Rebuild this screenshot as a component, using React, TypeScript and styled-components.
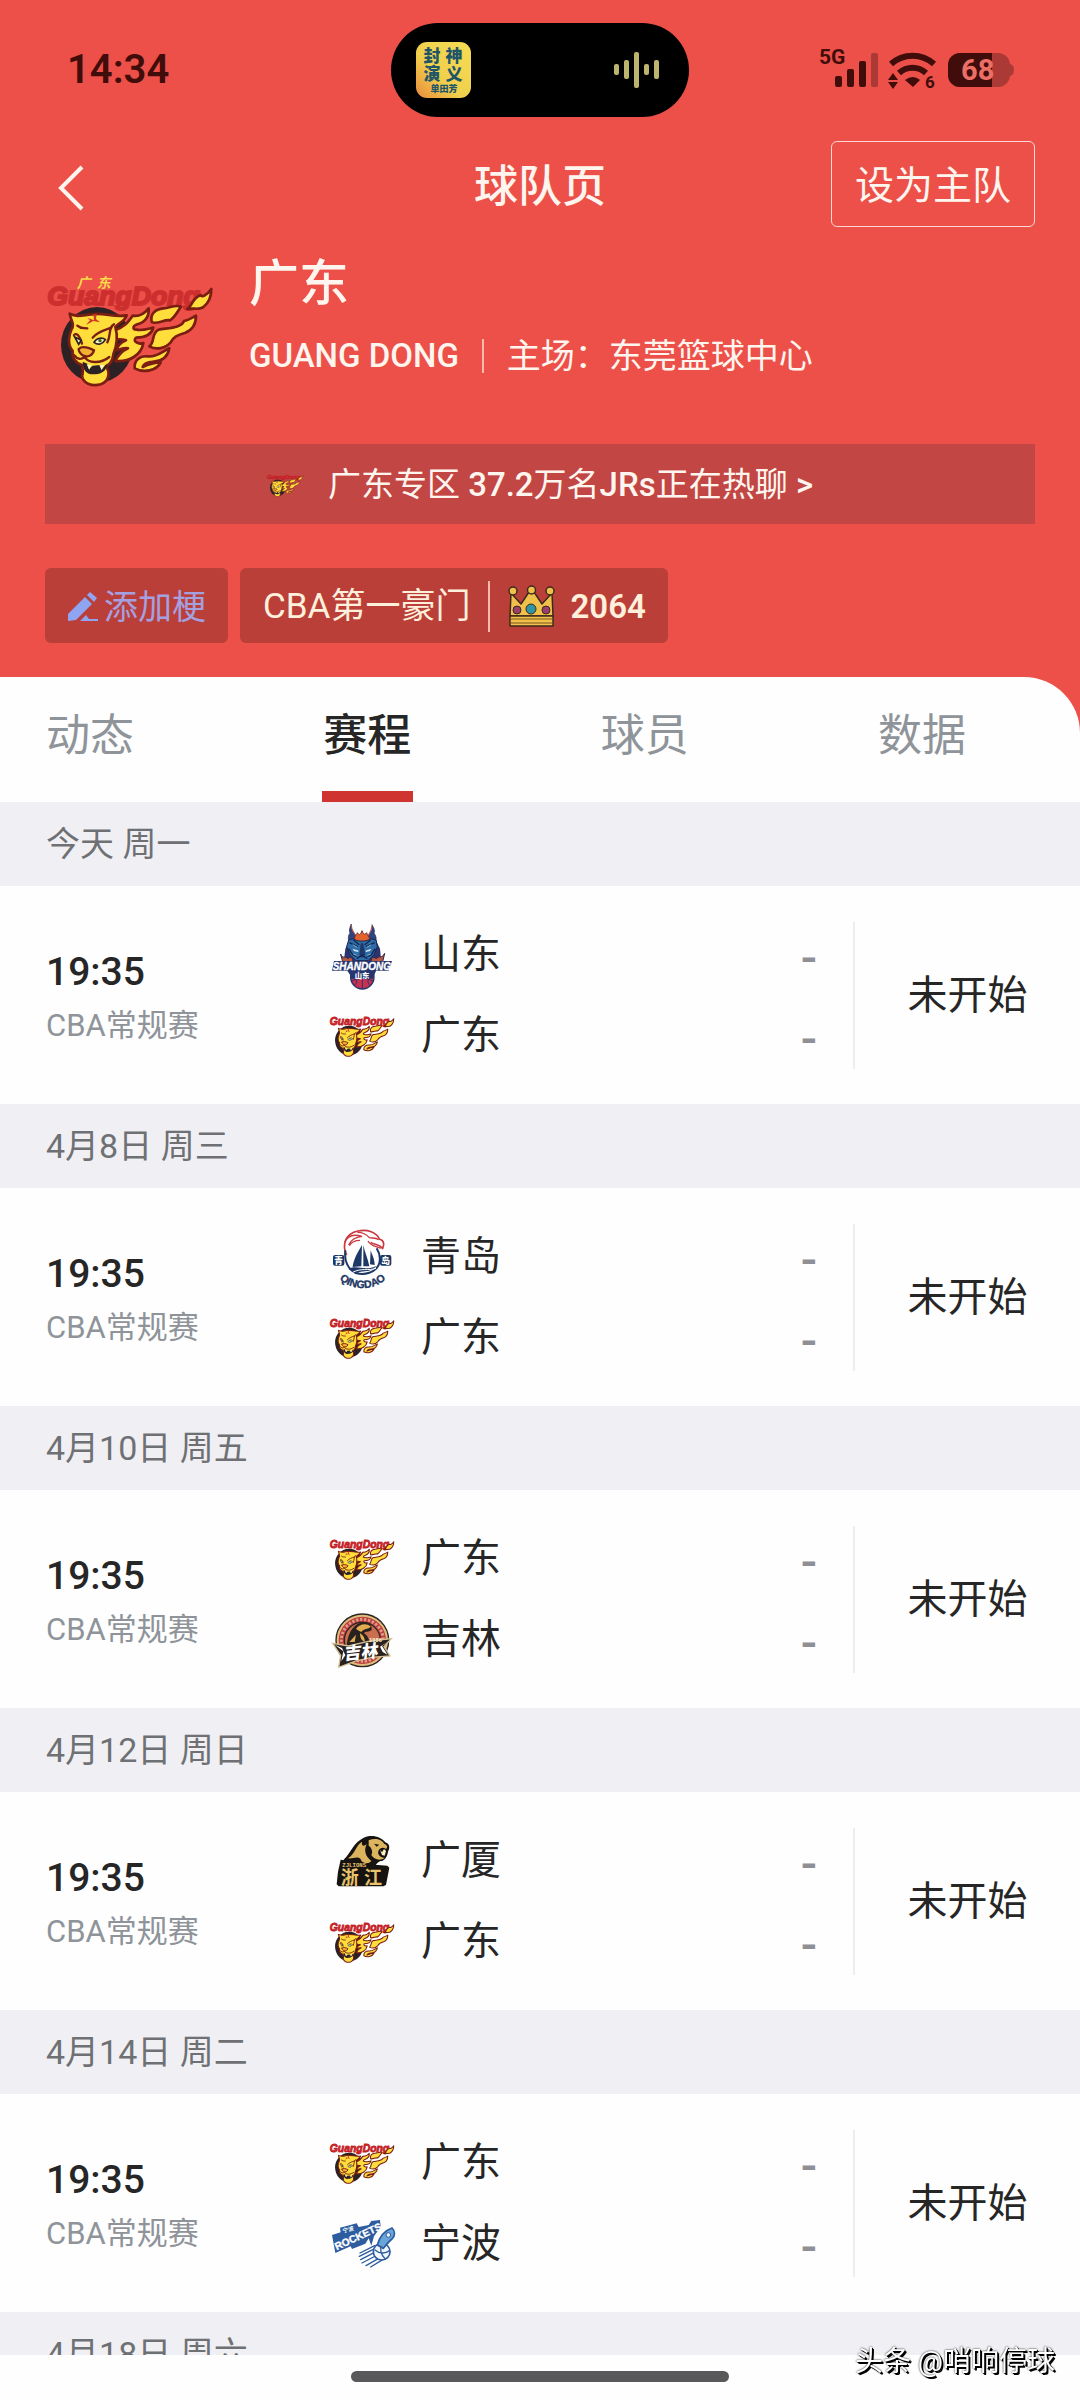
import React from 'react';
import styled, { createGlobalStyle } from 'styled-components';

const GlobalStyle = createGlobalStyle`
  *, *::before, *::after { box-sizing: border-box; }
  body {
    margin: 0;
    background: #fefefe;
    font-family: Roboto, "Noto Sans CJK SC", sans-serif;
    color: #262626;
  }
  button {
    font: inherit;
    color: inherit;
    border: 0;
    padding: 0;
    margin: 0;
    background: none;
    cursor: pointer;
  }
  h1, h2, p, ul { margin: 0; padding: 0; font-weight: 400; }
  svg { display: block; flex: none; overflow: visible; }
`;

const Page = styled.div`
  display: flex;
  flex-direction: column;
  min-height: 100vh;
`;

const Hero = styled.header`
  padding: 23px 45px 34px;
  background: #ec5049;
  color: #fff5ef;
`;

const StatusBar = styled.div`
  display: grid;
  grid-template-columns: 1fr auto 1fr;
  align-items: center;
  color: #400d0b;
`;

const Clock = styled.time`
  padding-left: 22px;
  font-size: 40px;
  line-height: 48px;
  font-weight: 600;
`;

const Island = styled.div`
  display: flex;
  align-items: center;
  justify-content: space-between;
  width: 298px;
  height: 94px;
  padding: 0 29px 0 25px;
  border-radius: 47px;
  background: #000;
`;

const StatusIcons = styled.div`
  display: flex;
  justify-content: flex-end;
  padding-right: 20px;
`;

const NavBar = styled.nav`
  display: grid;
  grid-template-columns: 1fr auto 1fr;
  align-items: center;
  margin-top: 24px;
`;

const BackButton = styled.button`
  justify-self: start;
  padding: 12px 12px 4px;
`;

const Title = styled.h1`
  padding-top: 6px;
  font-size: 44px;
  line-height: 56px;
  font-weight: 500;
`;

const HomeTeamButton = styled.button`
  justify-self: end;
  height: 86px;
  padding: 3px 23px 0;
  border: 1px solid #fbd9d2;
  border-radius: 6px;
  font-size: 39px;
  line-height: 56px;
`;

const TeamRow = styled.section`
  display: flex;
  gap: 37px;
  margin-top: 26px;
  padding-left: 3px;
`;

const CrestBox = styled.div`
  padding-top: 24px;
`;

const TeamName = styled.h2`
  padding-top: 3px;
  font-size: 50px;
  line-height: 56px;
  font-weight: 500;
`;

const TeamMeta = styled.p`
  display: flex;
  align-items: center;
  gap: 23px;
  margin-top: 24px;
  font-size: 33px;
  line-height: 40px;
`;

const Arena = styled.span`
  font-size: 34px;
`;

const Latin = styled.span`
  font-weight: 500;
`;

const Rule = styled.span<{ $height: number }>`
  width: 2px;
  height: ${(p) => p.$height}px;
  background: #f7b9ae;
`;

const ChatBanner = styled.button`
  display: flex;
  align-items: center;
  justify-content: center;
  gap: 25px;
  width: 100%;
  height: 80px;
  padding-top: 2px;
  margin-top: 57px;
  background: #c24643;
  font-size: 33px;
  line-height: 40px;
`;

const Tags = styled.div`
  display: flex;
  gap: 12px;
  margin-top: 44px;
`;

const Tag = styled.button<{ $accent?: boolean }>`
  display: flex;
  align-items: center;
  gap: ${(p) => (p.$accent ? 6 : 18)}px;
  height: 75px;
  padding: 2px 22px 0 23px;
  border-radius: 6px;
  background: #ba3f39;
  color: ${(p) => (p.$accent ? '#a5a0e0' : '#fff0dc')};
  font-size: ${(p) => (p.$accent ? 34 : 35)}px;
  line-height: 40px;
`;

const Votes = styled.span`
  display: flex;
  align-items: center;
  gap: 15px;
  font-size: 33px;
  font-weight: 600;
`;

const TabsBack = styled.div`
  background: #ec5049;
`;

const Tabs = styled.div`
  display: flex;
  justify-content: space-between;
  padding: 0 112px 0 45px;
  border-top-right-radius: 56px;
  background: #fefefe;
`;

const Tab = styled.button<{ $active?: boolean }>`
  height: 125px;
  padding: 3px 2px 0 1px;
  border-bottom: 11px solid ${(p) => (p.$active ? '#d03430' : 'transparent')};
  color: ${(p) => (p.$active ? '#262626' : '#8e9499')};
  font-size: 44px;
  line-height: 56px;
  font-weight: ${(p) => (p.$active ? 500 : 400)};
`;

const DayHeading = styled.h2`
  padding: 20px 46px;
  background: #f0f0f4;
  color: #6f7074;
  font-size: 34px;
  line-height: 44px;
`;

const Match = styled.article`
  display: grid;
  grid-template-columns: 284px 1fr 227px;
  align-items: center;
  height: 218px;
  padding-left: 46px;
`;

const MatchTime = styled.time`
  display: block;
  padding-top: 3px;
  font-size: 39px;
  line-height: 48px;
  font-weight: 500;
`;

const League = styled.p`
  margin-top: 10px;
  color: #8e9499;
  font-size: 31px;
  line-height: 40px;
`;

const Sides = styled.ul`
  padding-right: 36px;
  list-style: none;
`;

const Side = styled.li`
  display: flex;
  align-items: center;
  height: 81px;
  font-size: 40px;
  line-height: 48px;
`;

const SideName = styled.span`
  margin-left: 27px;
`;

const Score = styled.span`
  margin-left: auto;
  padding-top: 6px;
  color: #909094;
  font-size: 48px;
  font-weight: 500;
`;

const MatchState = styled.p`
  height: 147px;
  border-left: 2px solid #ededf0;
  font-size: 40px;
  line-height: 147px;
  text-align: center;
`;

const HomeBar = styled.footer`
  position: fixed;
  left: 0;
  right: 0;
  bottom: 0;
  display: flex;
  justify-content: center;
  height: 45px;
  padding-top: 16px;
  background: #fefefe;
`;

const HomeHandle = styled.div`
  width: 35%;
  height: 11px;
  border-radius: 6px;
  background: #59595b;
`;

const Watermark = styled.span`
  position: absolute;
  right: 25px;
  bottom: 20px;
  color: #fff;
  font-size: 28px;
  line-height: 36px;
  text-shadow: 1px 1px 0 #000, 2px 2px 0 #000, 0 0 2px #000;
`;

function AlbumCover() {
  return (
    <svg width="55" height="56" viewBox="0 0 55 56" aria-hidden="true">
      <defs>
        <linearGradient id="cover" x1="1" y1="0" x2="0" y2="1">
          <stop offset="0" stopColor="#f5dc55" />
          <stop offset="0.6" stopColor="#f0cf4c" />
          <stop offset="1" stopColor="#ea8a3a" />
        </linearGradient>
      </defs>
      <rect width="55" height="56" rx="11" fill="url(#cover)" />
      <g fill="#1f5568" fontFamily="Noto Sans CJK SC, sans-serif" fontWeight="900" textAnchor="middle">
        <text x="16" y="20" fontSize="17">封</text>
        <text x="38" y="20" fontSize="17">神</text>
        <text x="16" y="38" fontSize="17">演</text>
        <text x="38" y="38" fontSize="17">义</text>
        <text x="28" y="50" fontSize="9">单田芳</text>
      </g>
    </svg>
  );
}

function SoundWave() {
  return (
    <svg width="46" height="38" viewBox="0 0 46 38" fill="#bdb56e" aria-hidden="true">
      <rect x="0" y="13" width="5" height="11" rx="2" />
      <rect x="10" y="9" width="5" height="19" rx="2" />
      <rect x="20" y="1" width="5" height="36" rx="2" />
      <rect x="30" y="13" width="5" height="11" rx="2" />
      <rect x="40" y="9" width="5" height="19" rx="2" />
    </svg>
  );
}

function SystemIcons() {
  return (
    <svg width="196" height="44" viewBox="0 0 196 44" fill="#400d0b" role="img" aria-label="5G, Wi-Fi 6, 68%">
      <g fontFamily="Roboto, sans-serif" fontWeight="700">
        <text x="0" y="16" fontSize="21">5G</text>
        <text x="106" y="40" fontSize="17">6</text>
      </g>
      <rect x="16" y="28" width="7" height="11" rx="2" />
      <rect x="28" y="21" width="7" height="18" rx="2" />
      <rect x="40" y="13" width="7" height="26" rx="2" />
      <rect x="52" y="5" width="7" height="34" rx="2" fill="#ab3a36" />
      <g fill="none" stroke="#400d0b" strokeWidth="6">
        <path d="M72 16a32 32 0 0 1 43 0" />
        <path d="M80 25a20 20 0 0 1 27 0" />
      </g>
      <path d="M86 32q8-6 15 0l-7 7z" />
      <path d="M69 32l5-7 5 7zM69 34h10l-5 7z" />
      <rect x="129" y="5" width="62" height="34" rx="12" fill="#ab3a36" />
      <path d="M191 16q4 1 4 6t-4 6z" fill="#ab3a36" />
      <path d="M141 5h32v34h-32a12 12 0 0 1-12-12v-10a12 12 0 0 1 12-12z" />
      <text x="142" y="32" fontSize="29" fontWeight="700" fontFamily="Roboto, sans-serif" fill="#ec6f66">68</text>
    </svg>
  );
}

function GuangdongCrest({ width, onRed }: { width: number; onRed?: boolean }) {
  return (
    <svg width={width} height={Math.round((width * 330) / 492)} viewBox="144 110 492 330" aria-hidden="true">
      {onRed && (
        <text transform="translate(230 142) skewX(-14)" fontSize="42" fontWeight="700" fontFamily="Noto Sans CJK SC, sans-serif" fill="#fbd84a">
          <tspan x="0">广</tspan>
          <tspan x="60">东</tspan>
        </text>
      )}
      <text x="142" y="195" fontSize="80" fontWeight="700" fontStyle="italic" fontFamily="Liberation Sans, sans-serif" fill={onRed ? '#cd2f2f' : '#d8232b'} stroke={onRed ? '#cd2f2f' : '#c01f26'} strokeWidth="6">GuangDong</text>
      <ellipse cx="291" cy="314" rx="108" ry="114" fill="#2c2226" />
      <g fill="#ffde3c" stroke="#7a1d12" strokeWidth="8" strokeLinejoin="round">
        <path d="M456 246C448 222 466 206 490 204C512 202 526 192 543 199C532 214 526 230 510 240C494 236 474 252 456 246Z" />
        <path d="M562 206C578 196 574 176 602 164C604 172 620 166 634 146C634 172 626 188 610 200C598 210 582 202 562 206Z" />
        <path d="M448 318C466 306 452 280 476 268C512 262 544 262 552 242C566 240 574 234 588 226C588 248 578 268 556 277C532 284 520 290 512 306C496 324 470 330 448 318Z" />
        <path d="M404 384C402 360 420 346 442 348C470 352 488 332 508 324C504 346 492 362 462 364C440 366 430 372 428 380C448 370 466 366 482 366C470 392 430 398 404 384Z" />
        <path d="M340 272C372 262 384 246 398 226C408 228 428 226 446 204C448 228 438 244 412 252C396 258 398 268 410 268C426 272 442 266 460 262C454 284 432 292 408 292C398 300 410 314 430 308C424 344 388 366 346 362C356 342 366 332 384 324C370 322 362 326 352 330C350 318 362 306 378 300C366 296 356 296 348 298Z" />
        <path d="M209 220C230 232 250 224 274 222C312 216 342 232 380 225C374 244 354 248 346 260C354 288 350 318 340 342C338 364 326 374 318 378C332 398 326 424 302 432C274 440 248 428 246 406C252 394 246 382 246 374C226 368 214 350 218 332C202 314 206 286 214 268C226 252 212 240 209 220Z" />
      </g>
      <path d="M248 364L262 370L266 386L278 376L300 374L306 386L320 370C322 394 300 402 278 402C262 402 248 392 248 364Z" fill="#2c2226" />
      <path d="M260 372l8 16 6-13zM298 375l7 15 7-16z" fill="#fff7c8" />
      <g fill="none" stroke="#7a1d12" strokeWidth="7" strokeLinecap="round">
        <path d="M236 326C246 316 266 322 282 330C278 346 262 352 250 346C240 340 236 334 236 326Z" fill="#f0b034" />
        <path d="M222 284C230 276 240 288 246 310" />
        <path d="M278 292C290 276 312 270 334 262" />
        <path d="M222 344C232 358 244 358 254 350C264 368 300 372 328 350" />
        <path d="M342 252C324 260 334 284 322 306" />
        <path d="M232 256C242 266 250 262 262 264" />
      </g>
      <path d="M280 222L282 240L262 232L270 240L258 254L280 242L300 246L288 236L290 222Z" fill="#cf3a22" />
      <path d="M282 306C290 292 308 290 316 298C308 312 294 316 282 306Z" fill="#f6f6c0" stroke="#2c2226" strokeWidth="5" />
      <circle cx="300" cy="301" r="5" fill="#3f5a20" />
      <path d="M224 290l20 10-8 12z" fill="#f6f6c0" stroke="#2c2226" strokeWidth="5" />
    </svg>
  );
}

function ShandongCrest() {
  return (
    <svg width="64" height="68" viewBox="90 57 192 204" aria-hidden="true">
      <path d="M136 140L150 112H226L240 140L244 180L212 232H160L130 190Z" fill="#2b3470" />
      <path d="M154 66C150 88 166 92 174 112L152 130C142 116 144 98 150 94C146 84 150 76 154 66ZM216 68C220 88 206 94 200 112L224 130C232 114 228 100 222 94C226 84 220 76 216 68Z" fill="#33437f" stroke="#1b2550" strokeWidth="2" />
      <path d="M154 70C154 86 166 94 170 108M216 72C214 88 206 94 202 108" fill="none" stroke="#b0523f" strokeWidth="3" />
      <path d="M164 122C158 106 170 100 172 92C178 102 182 98 186 86C192 100 194 98 200 92C202 104 214 108 208 122Z" fill="#e2632e" stroke="#7a2a2a" strokeWidth="3" />
      <path d="M146 114L160 110C172 120 200 120 212 110L228 114L232 134L222 158L204 176H168L150 158L140 134Z" fill="#2f6da8" stroke="#1b2550" strokeWidth="3" />
      <path d="M158 140L176 146L174 150L162 147ZM214 140L196 146L198 150L210 147Z" fill="#dceaf4" />
      <path d="M182 124L178 158L186 168L196 158L190 124Z" fill="#1c3a6c" />
      <g fill="none" stroke="#16264f" strokeWidth="4">
        <path d="M148 122L174 134M224 122L198 134M146 140L158 158L170 164M226 140L214 158L202 164M160 114L178 128M212 114L194 128M170 170L186 160L202 170" />
      </g>
      <path d="M158 128L172 136M214 128L200 136M160 156L170 160M212 156L202 160" stroke="#7fb4d8" strokeWidth="3" />
      <path d="M122 156C126 172 136 160 144 170C152 160 160 170 158 180H128ZM254 154C246 170 238 160 228 170C220 160 212 170 214 180H248Z" fill="#b8573f" stroke="#33284b" strokeWidth="3" />
      <circle cx="187" cy="226" r="35" fill="#c93150" stroke="#25356f" strokeWidth="4" />
      <path d="M187 228V260M154 238C174 226 200 226 220 238M164 250C172 242 172 234 164 226M210 250C202 242 202 234 210 226" fill="none" stroke="#25356f" strokeWidth="3" />
      <path d="M102 177H276L266 206H228L218 230H154L146 206H96Z" fill="#25356f" />
      <text x="98" y="203" fontSize="30" fontWeight="700" fontStyle="italic" fontFamily="Liberation Sans, sans-serif" fill="#fff" stroke="#fff">SHANDONG</text>
      <text x="164" y="227" fontSize="22" fontWeight="900" fontFamily="Noto Sans CJK SC, sans-serif" fill="#fff">山东</text>
    </svg>
  );
}

function QingdaoCrest() {
  return (
    <svg width="64" height="68" viewBox="90 64 192 204" aria-hidden="true">
      <path d="M140 160C126 132 134 96 174 88C202 82 230 92 238 112C252 116 254 128 248 140C236 126 224 130 212 122" fill="#fff" stroke="#c9383f" strokeWidth="5" />
      <path d="M134 122C144 98 166 98 186 104C168 106 154 112 146 130M172 92C188 92 200 98 208 108C218 110 228 108 236 114M204 118C214 136 232 134 242 140M148 132C156 118 168 116 180 116" fill="none" stroke="#c9383f" strokeWidth="4" />
      <path d="M136 146C132 178 144 204 168 214C194 222 226 212 236 190C242 174 240 156 230 140" fill="none" stroke="#1e3865" strokeWidth="6" />
      <path d="M186 130C170 156 160 176 158 196L184 194ZM190 130C194 152 204 170 208 194H190ZM212 146C216 160 224 172 224 190L210 188Z" fill="#1e3865" />
      <path d="M146 202C170 188 196 210 230 192C208 218 182 202 168 218Z" fill="#1e3865" />
      <path d="M158 212C184 198 204 208 228 200" stroke="#fff" strokeWidth="3" fill="none" />
      <rect x="99" y="160" width="34" height="32" rx="6" fill="#1e3865" />
      <rect x="240" y="160" width="34" height="32" rx="6" fill="#1e3865" />
      <g fontFamily="Noto Sans CJK SC, sans-serif" fontWeight="900" fontSize="26" fill="#fff" textAnchor="middle">
        <text x="116" y="186">青</text>
        <text x="257" y="186">岛</text>
      </g>
      <path id="qd-arc" d="M114 226C146 270 230 270 262 226" fill="none" />
      <text fontFamily="Liberation Sans, sans-serif" fontWeight="700" fontSize="32" fill="#1e3865" stroke="#1e3865">
        <textPath href="#qd-arc" startOffset="50%" textAnchor="middle">QINGDAO</textPath>
      </text>
    </svg>
  );
}

function JilinCrest() {
  return (
    <svg width="64" height="68" viewBox="90 284 192 204" aria-hidden="true">
      <circle cx="187" cy="387" r="79" fill="#e0bd7c" stroke="#2c2522" strokeWidth="4" />
      <circle cx="187" cy="387" r="71" fill="#b9403f" />
      <circle cx="187" cy="387" r="63" fill="none" stroke="#e39a86" strokeWidth="9" strokeDasharray="7 5" />
      <circle cx="187" cy="387" r="54" fill="#c96f50" stroke="#2c2522" strokeWidth="4" />
      <path d="M140 408C142 370 156 342 182 334C202 328 218 340 215 356C206 364 196 358 192 366C206 374 212 392 206 408Z" fill="#29211e" />
      <path d="M168 352C178 338 200 334 212 346C206 354 192 350 184 362C178 358 172 356 168 352ZM180 366C190 372 196 382 194 392C184 388 180 378 180 366ZM148 392L168 370L164 392Z" fill="#e2ad50" />
      <path d="M98 396L146 404L204 390L274 382L252 406L270 434L214 438L164 450L116 468L122 432Z" fill="#28211f" stroke="#d5c294" strokeWidth="4" />
      <g fill="#fff" fontFamily="Noto Sans CJK SC, sans-serif" fontWeight="900">
        <text fontSize="51" transform="translate(132 446) rotate(-6) skewX(-12)">吉林</text>
        <text x="207" y="392" fontSize="16" fill="#fbe8c4">1956</text>
      </g>
      <path d="M104 400L130 420L124 450L136 432L126 410ZM266 390L246 404L256 420L262 430L248 422L240 406Z" fill="#fff" />
    </svg>
  );
}

function ZhejiangCrest() {
  return (
    <svg width="64" height="68" viewBox="90 48 192 204" aria-hidden="true">
      <path d="M130 148C156 122 162 88 204 76C224 72 246 80 256 94C270 98 270 112 264 122C262 136 254 150 242 150C232 154 228 160 224 168H130Z" fill="#171311" />
      <path d="M144 142C166 128 168 102 186 92C184 104 190 108 200 100C190 120 198 138 214 150C204 162 184 156 182 144C170 134 160 144 144 142ZM206 88C226 80 246 86 252 98C262 102 264 108 258 114C250 108 240 110 236 118C230 130 242 142 254 140C240 152 220 144 214 132C220 122 214 108 206 104Z" fill="#dcb45e" />
      <path d="M240 116L246 124L252 114L258 120L254 134L246 132Z" fill="#fff0c4" />
      <path d="M222 98l16 3-8 6z" fill="#171311" />
      <path d="M122 146L206 160L262 164L268 170L258 222L250 226H116L110 220L114 182Z" fill="#171311" />
      <text x="127" y="168" fontSize="17" fontWeight="700" fontFamily="Liberation Mono, monospace" fill="#e8c36c">ZJLIONS</text>
      <g fontSize="54" fontWeight="700" fontFamily="Noto Sans CJK SC, sans-serif" fill="#e8c36c">
        <text x="122" y="220">浙</text>
        <text x="192" y="220">江</text>
      </g>
    </svg>
  );
}

function NingboCrest() {
  return (
    <svg width="64" height="68" viewBox="90 267 192 204" aria-hidden="true">
      <path d="M96 342L122 334L120 320L170 307L176 318L206 312L214 300L240 297L242 318L222 346L214 374L206 352L196 368L156 384L152 376L106 396Z" fill="#2d5d9e" />
      <g fill="#fff" fontFamily="Liberation Sans, sans-serif" fontWeight="700">
        <text fontSize="31" transform="translate(110 388) rotate(-25)" stroke="#fff">ROCKETS</text>
        <text fontSize="17" transform="translate(130 336) rotate(-15)" fontFamily="Noto Sans CJK SC, sans-serif">宁波</text>
      </g>
      <g stroke="#2d5d9e" strokeWidth="4" strokeLinecap="round">
        <path d="M224 374L180 396M226 382L178 406M228 392L182 416M232 402L186 426M240 410L198 434M248 416L212 438" />
      </g>
      <circle cx="245" cy="392" r="25" fill="#f2f8fd" stroke="#2d5d9e" strokeWidth="5" />
      <path d="M224 386C240 400 256 398 270 388M246 368C238 386 244 402 256 414" fill="none" stroke="#2d5d9e" strokeWidth="4" />
      <path d="M232 372C238 350 250 330 276 321C286 330 286 344 276 354C266 362 260 370 250 382Z" fill="#69a4da" stroke="#2d5d9e" strokeWidth="5" />
      <circle cx="265" cy="342" r="7" fill="#e9f4fc" stroke="#2d5d9e" strokeWidth="3" />
    </svg>
  );
}

function Pencil() {
  return (
    <svg width="30" height="30" viewBox="0 0 30 30" fill="#8fa5f2" aria-hidden="true">
      <path d="M0 22L17 5L24 12L8 28L0 29Z" />
      <path d="M19 3L22 0L29 6L26 10Z" />
      <path d="M12 29L18 23L21 27L30 27V29Z" />
    </svg>
  );
}

function Crown() {
  return (
    <svg width="47" height="42" viewBox="0 0 47 42" aria-hidden="true">
      <g fill="#f0c04a" stroke="#3c2a1e" strokeWidth="1.5" strokeLinejoin="round">
        <path d="M3 7L13 18L21 6H26L34 18L44 7L45 30H2Z" />
        <circle cx="5" cy="5" r="4" />
        <circle cx="23.5" cy="4" r="4" />
        <circle cx="42" cy="5" r="4" />
        <path d="M2 30H45V40H2Z" />
      </g>
      <path d="M2 33H45M2 37H45" stroke="#7a551e" strokeWidth="1" />
      <g stroke="#3c2a1e" strokeWidth="1">
        <circle cx="9" cy="24" r="4" fill="#9a3f6c" />
        <circle cx="23" cy="23" r="5" fill="#2f95a4" />
        <circle cx="38" cy="24" r="4" fill="#9a3f6c" />
      </g>
    </svg>
  );
}

type TeamKey = 'gd' | 'sd' | 'qd' | 'jl' | 'gs' | 'nb';

const teams: Record<TeamKey, { name: string; crest: React.ReactNode }> = {
  gd: { name: '广东', crest: <GuangdongCrest width={64} /> },
  sd: { name: '山东', crest: <ShandongCrest /> },
  qd: { name: '青岛', crest: <QingdaoCrest /> },
  jl: { name: '吉林', crest: <JilinCrest /> },
  gs: { name: '广厦', crest: <ZhejiangCrest /> },
  nb: { name: '宁波', crest: <NingboCrest /> },
};

const schedule: { day: string; sides: TeamKey[] }[] = [
  { day: '今天 周一', sides: ['sd', 'gd'] },
  { day: '4月8日 周三', sides: ['qd', 'gd'] },
  { day: '4月10日 周五', sides: ['gd', 'jl'] },
  { day: '4月12日 周日', sides: ['gs', 'gd'] },
  { day: '4月14日 周二', sides: ['gd', 'nb'] },
  { day: '4月18日 周六', sides: [] },
];

const tabs = ['动态', '赛程', '球员', '数据'];

export default function App() {
  const [active, setActive] = React.useState('赛程');

  return (
    <Page>
      <GlobalStyle />
      <Hero>
        <StatusBar>
          <Clock>14:34</Clock>
          <Island>
            <AlbumCover />
            <SoundWave />
          </Island>
          <StatusIcons>
            <SystemIcons />
          </StatusIcons>
        </StatusBar>
        <NavBar>
          <BackButton aria-label="返回">
            <svg width="28" height="46" viewBox="0 0 28 46" fill="none" stroke="#fff5ef" strokeWidth="4">
              <path d="M25 2L4 23L25 44" />
            </svg>
          </BackButton>
          <Title>球队页</Title>
          <HomeTeamButton>设为主队</HomeTeamButton>
        </NavBar>
        <TeamRow>
          <CrestBox>
            <GuangdongCrest width={164} onRed />
          </CrestBox>
          <div>
            <TeamName>广东</TeamName>
            <TeamMeta>
              <Latin>GUANG DONG</Latin>
              <Rule $height={34} />
              <Arena>主场：东莞篮球中心</Arena>
            </TeamMeta>
          </div>
        </TeamRow>
        <ChatBanner>
          <GuangdongCrest width={36} />
          <span>
            广东专区 <Latin>37.2</Latin>万名<Latin>JRs</Latin>正在热聊 <Latin>&gt;</Latin>
          </span>
        </ChatBanner>
        <Tags>
          <Tag $accent>
            <Pencil />
            添加梗
          </Tag>
          <Tag>
            CBA第一豪门
            <Rule $height={51} />
            <Votes>
              <Crown />
              2064
            </Votes>
          </Tag>
        </Tags>
      </Hero>
      <TabsBack>
        <Tabs role="tablist">
          {tabs.map((tab) => (
            <Tab key={tab} role="tab" aria-selected={tab === active} $active={tab === active} onClick={() => setActive(tab)}>
              {tab}
            </Tab>
          ))}
        </Tabs>
      </TabsBack>
      <main>
        {schedule.map(({ day, sides }) => (
          <section key={day}>
            <DayHeading>{day}</DayHeading>
            {sides.length > 0 && (
              <Match>
                <div>
                  <MatchTime>19:35</MatchTime>
                  <League>CBA常规赛</League>
                </div>
                <Sides>
                  {sides.map((side) => (
                    <Side key={side}>
                      {teams[side].crest}
                      <SideName>{teams[side].name}</SideName>
                      <Score>-</Score>
                    </Side>
                  ))}
                </Sides>
                <MatchState>未开始</MatchState>
              </Match>
            )}
          </section>
        ))}
      </main>
      <HomeBar>
        <HomeHandle />
        <Watermark>头条 @哨响停球</Watermark>
      </HomeBar>
    </Page>
  );
}
